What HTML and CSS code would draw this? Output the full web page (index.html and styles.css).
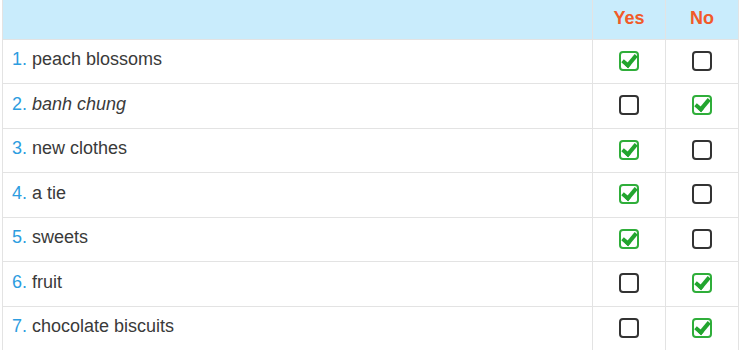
FILE: index.html
```html
<!DOCTYPE html>
<html>
<head>
<meta charset="utf-8">
<link rel="stylesheet" href="styles.css">
</head>
<body>
<table class="quiz">
  <thead>
    <tr><th class="item"></th><th class="opt">Yes</th><th class="opt">No</th></tr>
  </thead>
  <tbody>
    <tr><td class="item"><span class="num">1.</span> peach blossoms</td><td class="opt"><span class="box on"></span></td><td class="opt"><span class="box"></span></td></tr>
    <tr><td class="item"><span class="num">2.</span> <em>banh chung</em></td><td class="opt"><span class="box"></span></td><td class="opt"><span class="box on"></span></td></tr>
    <tr><td class="item"><span class="num">3.</span> new clothes</td><td class="opt"><span class="box on"></span></td><td class="opt"><span class="box"></span></td></tr>
    <tr><td class="item"><span class="num">4.</span> a tie</td><td class="opt"><span class="box on"></span></td><td class="opt"><span class="box"></span></td></tr>
    <tr><td class="item"><span class="num">5.</span> sweets</td><td class="opt"><span class="box on"></span></td><td class="opt"><span class="box"></span></td></tr>
    <tr><td class="item"><span class="num">6.</span> fruit</td><td class="opt"><span class="box"></span></td><td class="opt"><span class="box on"></span></td></tr>
    <tr><td class="item"><span class="num">7.</span> chocolate biscuits</td><td class="opt"><span class="box"></span></td><td class="opt"><span class="box on"></span></td></tr>
  </tbody>
</table>
</body>
</html>
```
FILE: styles.css
```css
html, body { margin: 0; padding: 0; background: #fff; }
body { padding-left: 2px; font-family: "Liberation Sans", Arial, sans-serif; }
.quiz {
  border-collapse: collapse;
  width: 737px;
  font-size: 18px;
  color: #3a3a3a;
}
.quiz th, .quiz td { border: 1px solid #e3e3e3; padding: 0; }
.quiz thead tr { height: 39px; }
.quiz thead th { background: #c9ecfc; border-top: none; color: #f15a29; font-weight: bold; font-size: 18px; padding-bottom: 2px; }
.quiz tbody tr { height: 44.5px; }
.quiz td.item { padding-left: 9px; padding-bottom: 3px; text-align: left; }
.quiz .opt { width: 72px; text-align: center; }
.quiz td.opt { vertical-align: middle; }
.num { color: #2d9de0; }
em { font-style: italic; }
.box {
  display: inline-block;
  width: 16px; height: 16px;
  border: 2px solid #333;
  border-radius: 4px;
  vertical-align: middle;
  position: relative;
  top: -1px;
}
.box.on { border-color: #2fae3a; }
.box.on::after {
  content: "";
  position: absolute;
  left: 4px; top: -1px;
  width: 5px; height: 11px;
  border: solid #22a52e;
  border-width: 0 4px 4px 0;
  transform: rotate(40deg);
}
```
